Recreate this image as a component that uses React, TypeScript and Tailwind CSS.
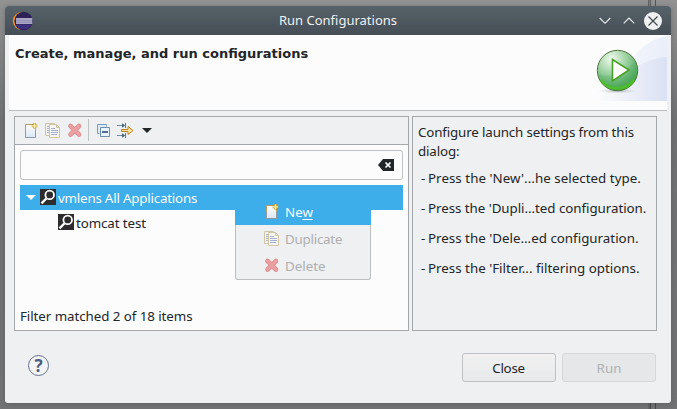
import type { ReactNode } from "react";

function EclipseLogo() {
  return (
    <svg width="22" height="20" viewBox="0 0 22 20" className="shrink-0">
      <circle cx="9.8" cy="10" r="9" fill="#f7941e" />
      <circle cx="11.6" cy="10" r="9.2" fill="#2c2255" />
      <path d="M3.5 13.5h16a9 9 0 0 1-16 0z" fill="#3d2f7d" />
      <path d="M4 7h16.300v6H4z" fill="#aaa6c4" />
      <path d="M4 9.500h16M4 11.500h16" stroke="#8d88b0" strokeWidth=".7" />
    </svg>
  );
}

function NewIcon() {
  return (
    <svg width="16" height="16" viewBox="0 0 16 16" className="shrink-0">
      <defs>
        <linearGradient id="page" x2="0" y2="1">
          <stop stopColor="#fffdf5" />
          <stop offset="1" stopColor="#d9e7fb" />
        </linearGradient>
      </defs>
      <path d="M2.5 2.500h10v13h-10z" fill="url(#page)" stroke="#b79e65" />
      <path d="M2.500 9v6.500h10V9" fill="none" stroke="#8f9aa6" />
      <path d="M11.500 1v5.600M8.700 3.800h5.600" stroke="#cda63c" strokeWidth="2.800" />
      <path d="M11.500 1.500v4.600M9.200 3.800h4.600" stroke="#fff0a8" strokeWidth="1.200" />
    </svg>
  );
}

function DuplicateIcon() {
  return (
    <svg width="16" height="16" viewBox="0 0 16 16" className="shrink-0">
      <path d="M.5 1.500h9v12h-9z" fill="#f3f1e9" stroke="#cfc6aa" />
      <path d="M2 4.500h3M2 6.500h3M2 8.500h3M2 10.500h3" stroke="#a9b7ce" />
      <path d="M4.500 2.500h7l3 3v10h-10z" fill="#f7f6f2" stroke="#d0c5a3" />
      <path d="M11.500 2.500v3h3" fill="none" stroke="#d0c5a3" />
      <path d="M6 6.500h4M6 8.500h7M6 10.500h7M6 12.500h6" stroke="#a3b0d2" />
    </svg>
  );
}

function DeleteIcon() {
  return (
    <svg width="16" height="16" viewBox="0 0 16 16" className="shrink-0">
      <path d="M3.500 4l8.500 8.500M12 4l-8.500 8.500" stroke="#dd8d90" strokeWidth="4.600" strokeLinecap="round" />
      <path d="M3.500 4l8.500 8.500M12 4l-8.500 8.500" stroke="#eba0a1" strokeWidth="3" strokeLinecap="round" />
    </svg>
  );
}

function CollapseIcon() {
  return (
    <svg width="16" height="16" viewBox="0 0 16 16">
      <path d="M3.500 11.500h-2v-9h9v2" fill="#dcebf7" stroke="#7c9dbb" />
      <path d="M4.500 5.500h9v9h-9z" fill="#e8f4fd" stroke="#6f8ead" />
      <path d="M6 10h6" stroke="#12336b" strokeWidth="1.400" />
    </svg>
  );
}

function FilterIcon() {
  return (
    <svg width="18" height="16" viewBox="0 0 18 16">
      <path d="M0 3.500h7M0 13.500h7" stroke="#6f8d9e" />
      <path d="M5 1.300l3.200 2.200L5 5.700zM5 11.300l3.200 2.200L5 15.700z" fill="#426578" />
      <path d="M8.500 1v5M8.500 11v5" stroke="#55798d" />
      <path d="M4.500 7.500h6.500v-3l5 4-5 4v-3H4.500z" fill="#fce5a6" stroke="#bd8220" />
    </svg>
  );
}

function LensIcon() {
  return (
    <svg width="16" height="16" viewBox="0 0 16 16" className="shrink-0">
      <path d="M0 0h16v16H0z" fill="#2d2d2d" />
      <circle cx="9.700" cy="5.900" r="4.300" fill="none" stroke="#fff" strokeWidth="1.800" />
      <path d="M6.300 9.500l-4.800 4.800" stroke="#fff" strokeWidth="2.400" />
    </svg>
  );
}

function RunBanner() {
  return (
    <svg width="74" height="66" viewBox="0 0 74 66">
      <defs>
        <linearGradient id="sky">
          <stop stopColor="#fcfcfc" />
          <stop offset="1" stopColor="#dae1f4" />
        </linearGradient>
        <linearGradient id="sky2">
          <stop stopColor="#fcfcfc" />
          <stop offset="1" stopColor="#eaeefa" />
        </linearGradient>
        <radialGradient id="ball" cx=".35" cy=".22" r=".85">
          <stop stopColor="#f0faee" />
          <stop offset=".45" stopColor="#9bd09f" />
          <stop offset=".8" stopColor="#55ae62" />
          <stop offset="1" stopColor="#43ac20" />
        </radialGradient>
        <radialGradient id="shade">
          <stop stopColor="#9a9fa5" stopOpacity=".8" />
          <stop offset="1" stopColor="#c9ccd2" stopOpacity="0" />
        </radialGradient>
      </defs>
      <path d="M74 1C53 5 42 18 34 32L4 66h70z" fill="url(#sky2)" />
      <path d="M74 22C58 23 46 29 36 38L4 66h70z" fill="url(#sky)" />
      <ellipse cx="24.500" cy="56" rx="20" ry="2.500" fill="url(#shade)" />
      <circle cx="24.500" cy="35.500" r="20.200" fill="url(#ball)" stroke="#50733c" />
      <path d="M6 39c13 5 25-3 36-12 5 17-5 28-18 28C15 55 7 49 6 39z" fill="#3f9e5b" opacity=".2" />
      <path d="M8 45c8 11 25 11 33 0" fill="none" stroke="#4bc51d" strokeWidth="3" opacity=".65" />
      <path d="M19.500 24.500v21.500l16.500-11z" fill="#fff" stroke="#47a126" strokeWidth="1.600" />
    </svg>
  );
}

function TitleBar() {
  return (
    <header className="grid h-[29px] shrink-0 grid-cols-[1fr_auto_1fr] items-center rounded-t-[3px] bg-linear-to-b from-[#566269] to-[#464e56] pr-[8px] pl-[7px] text-[13px] text-[#eff0f1]">
      <EclipseLogo />
      <h1 className="pb-px pl-[1px]">Run Configurations</h1>
      <svg width="62" height="20" viewBox="0 0 62 20" className="justify-self-end overflow-visible" fill="none">
        <path d="M-1.300 7L4 12.300 9.300 7M22.700 12.300L28 7l5.300 5.300" stroke="#eff0f1" strokeWidth="1.100" />
        <circle cx="52" cy="10" r="9" fill="#eff0f1" />
        <path d="M47.500 5.500l9 9M56.500 5.500l-9 9" stroke="#414950" strokeWidth="1.200" />
      </svg>
    </header>
  );
}

function MenuItem({ icon, children, active }: { icon: ReactNode; children: ReactNode; active?: boolean }) {
  return (
    <div className={`flex h-[27px] items-center gap-[5px] pb-[2px] ${active ? "bg-[#3daee9] pl-[29px] text-[#fcfcfc]" : "pl-[28px] text-[#adafb1]"}`}>
      {icon}
      <div className="pt-[2px]">{children}</div>
    </div>
  );
}

function Launchers() {
  return (
    <section className="relative flex h-[215px] w-[395px] flex-col border border-[#a5a8ab] bg-[#fcfcfc]">
      <div className="flex h-[28px] shrink-0 items-center border-b border-[#a5a8ab] bg-[#eff0f1] pb-px pl-[8px]">
        <NewIcon />
        <div className="ml-[6px]"><DuplicateIcon /></div>
        <div className="ml-[6px]"><DeleteIcon /></div>
        <div className="ml-[5px] h-[22px] w-px bg-[#bfc1c3]" />
        <div className="ml-[7px]"><CollapseIcon /></div>
        <div className="ml-[5px]"><FilterIcon /></div>
        <svg width="10" height="5" viewBox="0 0 10 5" className="ml-[7px]"><path d="M0 0h10L5 5z" fill="#232629" /></svg>
      </div>
      <div className="mx-[5px] mt-[5px] flex h-[30px] items-center justify-end rounded-[3px] border border-[#bfc1c2] pr-[8px]">
        <svg width="16" height="12" viewBox="0 0 16 12">
          <path d="M5 0h11v12H5L0 6z" fill="#232629" />
          <path d="M7.500 3.500l5 5M12.500 3.500l-5 5" stroke="#fff" strokeWidth="1.700" />
        </svg>
      </div>
      <div className="mx-[5px] mt-[5px] flex h-[25px] items-center bg-[#3daee9] pb-px pl-[6px] text-[#fcfcfc]">
        <svg width="10" height="5" viewBox="0 0 10 5"><path d="M0 0h10L5 5z" fill="#fcfcfc" /></svg>
        <div className="ml-[4px]"><LensIcon /></div>
        <span className="ml-[2px] pt-[2px] tracking-[-0.2px]">vmlens All Applications</span>
      </div>
      <div className="ml-[43px] flex h-[25px] items-center pb-px">
        <LensIcon />
        <span className="ml-[2px] pt-[2px] tracking-[-0.1px]">tomcat test</span>
      </div>
      <p className="mt-auto mb-[5px] ml-[5px] tracking-[-0.06px]">Filter matched 2 of 18 items</p>
      <div className="absolute top-[81px] left-[220px] h-[82px] w-[136px] rounded-b-[3px] border border-t-0 border-[#bbbdbf] bg-[#eff0f1]">
        <div className="-mx-px"><MenuItem active icon={<NewIcon />}><span>Ne<u className="underline-offset-2">w</u></span></MenuItem></div>
        <MenuItem icon={<DuplicateIcon />}><span className="tracking-[-0.22px]">Duplicate</span></MenuItem>
        <MenuItem icon={<DeleteIcon />}><span>Delete</span></MenuItem>
      </div>
    </section>
  );
}

const hints = [
  { text: "Press the 'New'...he selected type.", tracking: "tracking-[0.04px]" },
  { text: "Press the 'Dupli...ted configuration.", tracking: "tracking-[-0.04px]" },
  { text: "Press the 'Dele...ed configuration.", tracking: "tracking-[0.01px]" },
  { text: "Press the 'Filter... filtering options.", tracking: "tracking-[0.01px]" },
];

function Help() {
  return (
    <section className="h-[215px] w-[245px] border border-[#a5a8ab] pt-[6px] pl-[5px] whitespace-nowrap">
      <p className="leading-[19px] tracking-[-0.14px]">Configure launch settings from this<br />dialog:</p>
      <ul className="mt-[2px] pl-[3px]">
        {hints.map(({ text, tracking }) => (
          <li key={text} className={`h-[30px] leading-[30px] ${tracking}`}><span className="inline-block w-[7px]">-</span>{text}</li>
        ))}
      </ul>
    </section>
  );
}

export default function App() {
  return (
    <div className="h-[409px] w-[677px] overflow-hidden bg-linear-to-b from-[#929292] via-[#707173] via-30% to-[#727375] pt-[6px] pl-[5px] font-['Noto_Sans',sans-serif] text-[13.33px] leading-[18px] text-[#232629]">
      <div className="absolute top-0 left-[648px] h-[6px] w-[3px] border-x border-[#5f5f5f] bg-[#808080]" />
      <div className="absolute top-0 left-[655px] h-[6px] w-px bg-[#555]" />
      <div className="absolute top-[403px] left-[648px] h-[6px] w-[3px] border-r border-[#46484a] bg-[#636567]" />
      <div className="absolute top-[403px] left-[655px] h-[6px] w-px bg-[#46484a]" />
      <main className="relative flex h-[397px] w-[666px] flex-col rounded-[3px] bg-[#eff0f1] shadow-[0_1px_5px_#4446]">
        <TitleBar />
        <div className="mr-[4px] ml-[4px] flex h-[76px] shrink-0 justify-between border-b border-[#bbbdbe] bg-[#fcfcfc]">
          <h2 className="mt-[10px] ml-[6px] font-['DejaVu_Sans',sans-serif] text-[13px] font-bold">Create, manage, and run configurations</h2>
          <RunBanner />
        </div>
        <div className="mt-[5px] ml-[9px] flex gap-[3px]">
          <Launchers />
          <Help />
        </div>
        <footer className="mt-[22px] mr-[15px] ml-[23px] flex items-start">
          <div className="mt-[2px] flex size-[21px] items-center justify-center rounded-full border border-[#63718d] bg-[#f3f4f5] text-[17px] font-bold text-[#4d5d80]"><span className="pt-px">?</span></div>
          <button className="ml-auto h-[29px] w-[94px] rounded-[3px] border border-[#bfc1c2] bg-linear-to-b from-[#f1f1f2] to-[#e8e9ea] pr-px tracking-[-0.25px]">Close</button>
          <button disabled className="ml-[6px] h-[29px] w-[94px] rounded-[3px] border border-[#d5d7d8] bg-[#e6e7e8] text-[#b0b2b4]">Run</button>
        </footer>
      </main>
    </div>
  );
}
